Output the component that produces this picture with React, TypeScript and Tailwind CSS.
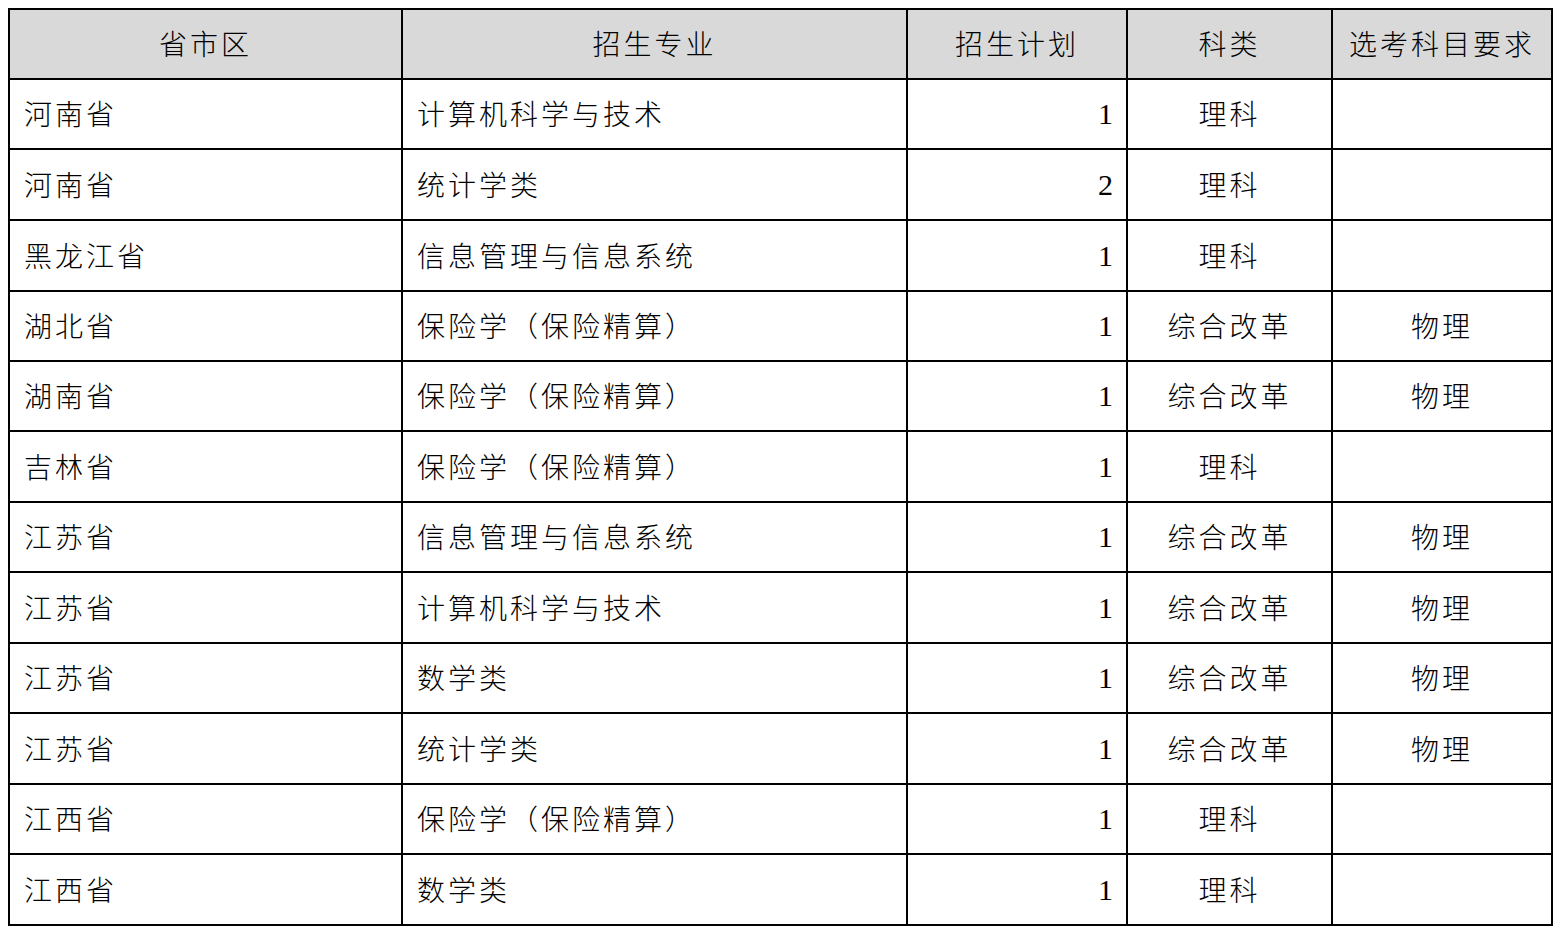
import clsx from 'clsx'

type Row = {
  region: string
  major: string
  plan: number
  kind: string
  subject: string
}

const rows: Row[] = [
  { region: '河南省', major: '计算机科学与技术', plan: 1, kind: '理科', subject: '' },
  { region: '河南省', major: '统计学类', plan: 2, kind: '理科', subject: '' },
  { region: '黑龙江省', major: '信息管理与信息系统', plan: 1, kind: '理科', subject: '' },
  { region: '湖北省', major: '保险学（保险精算）', plan: 1, kind: '综合改革', subject: '物理' },
  { region: '湖南省', major: '保险学（保险精算）', plan: 1, kind: '综合改革', subject: '物理' },
  { region: '吉林省', major: '保险学（保险精算）', plan: 1, kind: '理科', subject: '' },
  { region: '江苏省', major: '信息管理与信息系统', plan: 1, kind: '综合改革', subject: '物理' },
  { region: '江苏省', major: '计算机科学与技术', plan: 1, kind: '综合改革', subject: '物理' },
  { region: '江苏省', major: '数学类', plan: 1, kind: '综合改革', subject: '物理' },
  { region: '江苏省', major: '统计学类', plan: 1, kind: '综合改革', subject: '物理' },
  { region: '江西省', major: '保险学（保险精算）', plan: 1, kind: '理科', subject: '' },
  { region: '江西省', major: '数学类', plan: 1, kind: '理科', subject: '' },
]

// alternate 68/69 so the 12 body rows land on the reference's rule lines
const rowHeights = [
  'h-[68px]', 'h-[69px]', 'h-[69px]', 'h-[68px]', 'h-[68px]', 'h-[69px]',
  'h-[68px]', 'h-[69px]', 'h-[68px]', 'h-[69px]', 'h-[68px]', 'h-[69px]',
]

const cols = 'grid grid-cols-[391px_503px_218px_203px_218px] gap-x-[2px]'
const cjk = "font-['Noto_Sans_CJK_SC',sans-serif] font-light tracking-[3px]"
const num = "font-['Liberation_Serif',serif] text-[30px] tracking-normal"

const headers = ['省市区', '招生专业', '招生计划', '科类', '选考科目要求']

export default function App() {
  return (
    <div className="min-h-screen bg-white pl-[8px] pt-[8px] text-black">
      <div className={clsx('w-[1545px] bg-black p-[2px] flex flex-col gap-y-[2px]', cjk, 'text-[28px]')}>
        <div className={clsx(cols, 'h-[68px]')}>
          {headers.map(h => (
            <div key={h} className="bg-[#d9d9d9] flex items-center justify-center pb-[2px]">
              {h}
            </div>
          ))}
        </div>

        {rows.map((r, i) => (
          <div key={i} className={clsx(cols, rowHeights[i])}>
            <div className="bg-white flex items-center px-[14px] pb-[2px]">{r.region}</div>
            <div className="bg-white flex items-center px-[14px] pb-[2px]">{r.major}</div>
            <div className={clsx('bg-white flex items-center justify-end pr-[13px] pb-[1px]', num)}>{r.plan}</div>
            <div className="bg-white flex items-center justify-center pb-[2px]">{r.kind}</div>
            <div className="bg-white flex items-center justify-center pb-[2px]">{r.subject}</div>
          </div>
        ))}
      </div>
    </div>
  )
}
